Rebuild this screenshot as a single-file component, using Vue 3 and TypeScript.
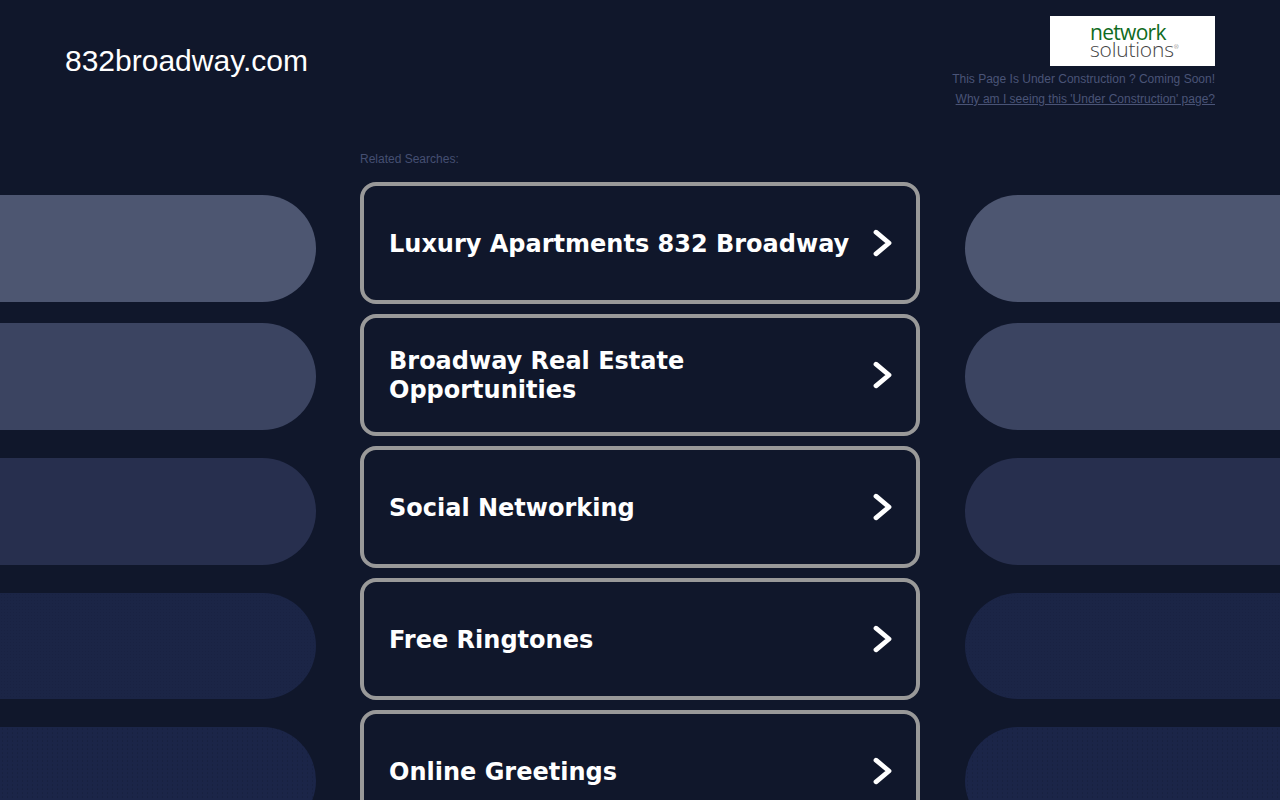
<script setup lang="ts">
const searches: string[] = [
  'Luxury Apartments 832 Broadway',
  'Broadway Real Estate Opportunities',
  'Social Networking',
  'Free Ringtones',
  'Online Greetings',
]
const shades: string[] = ['#4d5671', '#3b4461', '#272f4e', '#1b2546', '#1b2548']
</script>

<template>
  <div class="page">
    <header class="top">
      <h1 class="domain">832broadway.com</h1>
      <div class="notice">
        <div class="logo">
          <span class="logo-a">network</span>
          <span class="logo-b">solutions<sup>®</sup></span>
        </div>
        <p class="line">This Page Is Under Construction ? Coming Soon!</p>
        <a class="line why" href="#">Why am I seeing this 'Under Construction' page?</a>
      </div>
    </header>
    <div class="body">
      <div class="side side-left">
        <div v-for="s in shades" :key="s" class="pill" :style="{ backgroundColor: s }"></div>
      </div>
      <main class="center">
        <p class="related">Related Searches:</p>
        <a v-for="q in searches" :key="q" class="result" href="#">
          <span class="label">{{ q }}</span>
          <svg class="chev" width="20" height="28" viewBox="0 0 20 28" aria-hidden="true">
            <path d="M4 3.2 L17 14 L4 24.8" fill="none" stroke="#fff" stroke-width="4.8" stroke-linecap="round" stroke-linejoin="round" />
          </svg>
        </a>
      </main>
      <div class="side side-right">
        <div v-for="s in shades" :key="s" class="pill" :style="{ backgroundColor: s }"></div>
      </div>
    </div>
  </div>
</template>

<style>
html, body { margin: 0; background: #10172b; }
</style>

<style scoped>
.page {
  height: 800px;
  overflow: hidden;
  background: #10172b;
  font-family: "Liberation Sans", Arial, sans-serif;
}
.top {
  display: flex;
  justify-content: space-between;
  align-items: flex-start;
  height: 150px;
  padding: 16px 65px 0;
  box-sizing: border-box;
}
.domain {
  margin: 27px 0 0;
  font-size: 30px;
  line-height: 36px;
  font-weight: 400;
  color: #fff;
}
.notice {
  display: flex;
  flex-direction: column;
  align-items: flex-end;
}
.logo {
  width: 165px;
  height: 50px;
  background: #fff;
  display: flex;
  flex-direction: column;
  align-items: flex-start;
  justify-content: center;
  padding-left: 40px;
  box-sizing: border-box;
  font-family: "Open Sans", sans-serif;
  line-height: 17px;
}
.logo-a { color: #0f6b22; font-size: 21px; letter-spacing: -0.7px; }
.logo-b { color: #444; font-size: 21px; font-weight: 300; letter-spacing: -0.2px; }
.logo-b sup { font-size: 6px; vertical-align: 8px; line-height: 0; }
.line {
  margin: 0;
  font-size: 12px;
  line-height: 20px;
  color: #4a5477;
}
.notice p { margin-top: 3px; }
.why { text-decoration: underline; }
.body {
  display: flex;
  align-items: flex-start;
}
.side {
  width: 316px;
  padding-top: 45px;
  display: flex;
  flex-direction: column;
}
.pill {
  height: 107px;
  flex: none;
  margin-bottom: 28px;
  border-radius: 0 54px 54px 0;
}
.pill:first-child { margin-bottom: 21px; }
.pill:nth-child(4) {
  height: 106px;
  background-image: radial-gradient(circle, rgba(16, 23, 43, 0.15) 0.6px, transparent 1px);
  background-size: 3px 3px;
}
.pill:nth-child(5) {
  background-image: radial-gradient(circle, rgba(16, 23, 43, 0.25) 0.7px, transparent 1.1px);
  background-size: 5px 4px;
}
.side-right { width: 315px; margin-left: 45px; }
.side-right .pill { border-radius: 54px 0 0 54px; }
.center {
  width: 560px;
  margin-left: 44px;
  display: flex;
  flex-direction: column;
  gap: 10px;
}
.related {
  margin: 0;
  height: 22px;
  font-size: 12px;
  line-height: 18px;
  color: #454f72;
}
.result {
  flex: none;
  height: 122px;
  box-sizing: border-box;
  border: 4px solid #999;
  border-radius: 16px;
  padding: 0 25px;
  display: flex;
  align-items: center;
  justify-content: space-between;
  text-decoration: none;
  color: #fff;
}
.label {
  max-width: 470px;
  font-family: "DejaVu Sans", Verdana, sans-serif;
  font-weight: 700;
  font-size: 24px;
  line-height: 29px;
  position: relative;
  top: 1px;
}
.chev { flex: none; margin-right: -1px; }
</style>
